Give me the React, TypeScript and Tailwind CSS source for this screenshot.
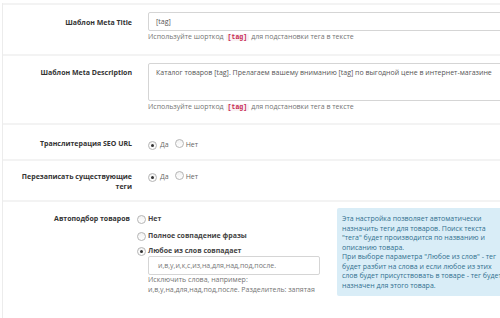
import React from "react";

function Radio({ checked }: { checked?: boolean }) {
  return (
    <span className="relative inline-block h-[9px] w-[9px] shrink-0 rounded-full border border-[#b5b5b5] bg-gradient-to-b from-[#f2f2f2] to-white">
      {checked && (
        <span className="absolute left-[2px] top-[2px] h-[3px] w-[3px] rounded-full bg-[#333]" />
      )}
    </span>
  );
}

function Code() {
  return (
    <span className="mx-[2px] rounded-[2px] bg-[#f9f2f4] px-[2px] font-['Liberation_Mono',monospace] text-[6.5px] font-bold text-[#c7254e]">
      [tag]
    </span>
  );
}

const infoLines = [
  "Эта настройка позволяет автоматически",
  "назначить теги для товаров. Поиск текста",
  "\"тега\" будет производится по названию и",
  "описанию товара.",
  "При выборе параметра \"Любое из слов\" - тег",
  "будет разбит на слова и если любое из этих",
  "слов будет присутствовать в товаре - тег будет",
  "назначен для этого товара.",
];

export default function App() {
  return (
    <main className="h-[318px] w-[500px] overflow-hidden bg-white font-['Open_Sans',sans-serif] text-[7px] leading-[10px] text-[#333]">
      <section className="ml-[2px] mt-[3px] h-[330px] w-[560px] border-l border-[#ececec]">
        {/* meta title */}
        <div className="flex border-t-2 border-[#f3f3f3] pb-[11px]">
          <label className="w-[129px] pt-[13px] text-right font-bold">
            Шаблон Meta Title
          </label>
          <div className="ml-[16px] flex-1 pt-[7px]">
            <div className="h-[19px] rounded-[2px] border border-[#d5d5d5] pl-[7px] pt-[4px] text-[#555]">
              [tag]
            </div>
            <p className="mt-[1px] text-[#737373]">
              Используйте шорткод<Code />для подстановки тега в тексте
            </p>
          </div>
        </div>

        {/* meta description */}
        <div className="flex border-t-2 border-[#f3f3f3] pb-[10px]">
          <label className="w-[129px] pt-[12px] text-right font-bold">
            Шаблон Meta Description
          </label>
          <div className="ml-[16px] flex-1 pt-[7px]">
            <div className="h-[38px] rounded-[2px] border border-[#d5d5d5] pl-[7px] pt-[4px] text-[#555]">
              Каталог товаров [tag]. Прелагаем вашему вниманию [tag] по выгодной цене в интернет-магазине
            </div>
            <p className="mt-[1px] text-[#737373]">
              Используйте шорткод<Code />для подстановки тега в тексте
            </p>
          </div>
        </div>

        {/* seo url */}
        <div className="flex border-t-2 border-[#f3f3f3] pb-[8px] pt-[14px]">
          <label className="w-[129px] text-right font-bold">
            Транслитерация SEO URL
          </label>
          <div className="ml-[16px] flex items-center text-[#666]">
            <Radio checked />
            <span className="ml-[3px]">Да</span>
            <span className="ml-[6px]">
              <Radio />
            </span>
            <span className="ml-[2px]">Нет</span>
          </div>
        </div>

        {/* overwrite tags */}
        <div className="flex border-t-2 border-[#f3f3f3] pb-[8px] pt-[11px]">
          <label className="w-[129px] text-right font-bold">
            Перезаписать существующие
            <br />
            теги
          </label>
          <div className="ml-[16px] flex h-[10px] items-center text-[#666]">
            <Radio checked />
            <span className="ml-[3px]">Да</span>
            <span className="ml-[6px]">
              <Radio />
            </span>
            <span className="ml-[2px]">Нет</span>
          </div>
        </div>

        {/* auto select */}
        <div className="flex border-t-2 border-[#f3f3f3]">
          <label className="w-[127px] pt-[12px] text-right font-bold">
            Автоподбор товаров
          </label>
          <div className="ml-[7px] w-[183px] pt-[12px]">
            <div className="flex items-center gap-[2px] font-bold text-[#444]">
              <Radio />
              <span>Нет</span>
            </div>
            <div className="mt-[7px] flex items-center gap-[2px] font-bold text-[#444]">
              <Radio />
              <span>Полное совпадение фразы</span>
            </div>
            <div className="mt-[5px] flex items-center gap-[2px] font-bold text-[#444]">
              <Radio checked />
              <span>Любое из слов совпадает</span>
            </div>
            <div className="ml-[11px]">
              <div className="h-[19px] rounded-[2px] border border-[#d5d5d5] pl-[9px] pt-[4px] text-[#777]">
                и,в,у,и,к,с,из,на,для,над,под,после.
              </div>
              <p className="text-[#737373]">
                Исключить слова, например:
                <br />
                и,в,у,на,для,над,под,после. Разделитель: запятая
              </p>
            </div>
          </div>
          <div className="ml-[17px] mt-[6px] h-[88px] w-[200px] rounded-[2px] bg-[#d9edf7] pl-[5px] pt-[6px] leading-[9.5px] text-[#31708f]">
            {infoLines.map((line) => (
              <div key={line} className="whitespace-nowrap">
                {line}
              </div>
            ))}
          </div>
        </div>
      </section>
    </main>
  );
}
